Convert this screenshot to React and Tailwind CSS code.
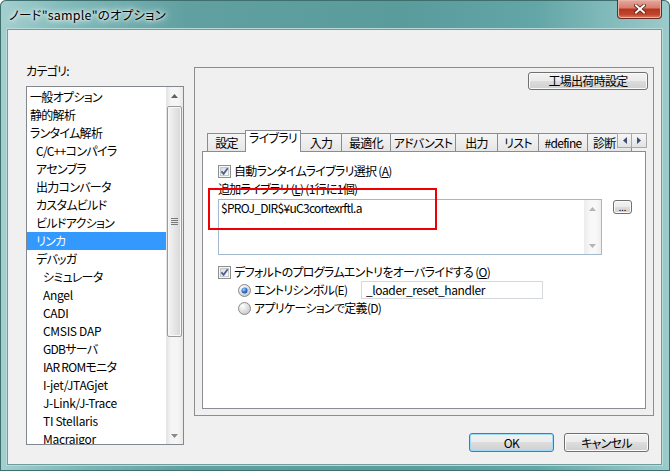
import React from "react";

const Check = () => (
  <svg width="13" height="13" viewBox="0 0 13 13" className="shrink-0">
    <defs>
      <linearGradient id="cbg" x1="0" y1="0" x2="1" y2="1">
        <stop offset="0" stopColor="#d6d6d6" />
        <stop offset="1" stopColor="#ffffff" />
      </linearGradient>
    </defs>
    <rect x="0.5" y="0.5" width="12" height="12" fill="#f6f6f6" stroke="#8e8f8f" />
    <rect x="2.5" y="2.5" width="8" height="8" fill="url(#cbg)" stroke="#c9c9c9" />
    <path d="M3.4 6.4 L5.6 8.9 L9.7 3.3" fill="none" stroke="#4a5f97" strokeWidth="1.8" />
  </svg>
);

const Radio = ({ checked }) => (
  <svg width="13" height="13" viewBox="0 0 13 13" className="shrink-0">
    <defs>
      <radialGradient id="rb" cx="0.35" cy="0.3" r="0.8">
        <stop offset="0" stopColor="#ffffff" />
        <stop offset="1" stopColor="#c4c4c4" />
      </radialGradient>
      <radialGradient id="rd" cx="0.4" cy="0.35" r="0.7">
        <stop offset="0" stopColor="#a8d6fa" />
        <stop offset="0.6" stopColor="#2f72c8" />
        <stop offset="1" stopColor="#1b4f99" />
      </radialGradient>
    </defs>
    <circle cx="6.5" cy="6.5" r="6" fill="url(#rb)" stroke="#8a8a8a" />
    {checked && <circle cx="6.5" cy="6.5" r="3" fill="url(#rd)" />}
  </svg>
);

const TriUp = ({ c = "#606060" }) => (
  <svg width="7" height="4" viewBox="0 0 7 4"><path d="M0 4 L3.5 0 L7 4 Z" fill={c} /></svg>
);
const TriDown = ({ c = "#606060" }) => (
  <svg width="7" height="4" viewBox="0 0 7 4"><path d="M0 0 L3.5 4 L7 0 Z" fill={c} /></svg>
);

const btn =
  "flex items-center justify-center rounded-[3px] border bg-[linear-gradient(#f2f2f2_0%,#ebebeb_49%,#dddddd_50%,#cfcfcf_100%)]";

const items = [
  ["一般オプション", 1],
  ["静的解析", 1],
  ["ランタイム解析", 1],
  ["C/C++コンパイラ", 2],
  ["アセンブラ", 2],
  ["出力コンバータ", 2],
  ["カスタムビルド", 2],
  ["ビルドアクション", 2],
  ["リンカ", 2, true],
  ["デバッガ", 2],
  ["シミュレータ", 3],
  ["Angel", 3, false, true],
  ["CADI", 3, false, true],
  ["CMSIS DAP", 3, false, true],
  ["GDBサーバ", 3],
  ["IAR ROMモニタ", 3],
  ["I-jet/JTAGjet", 3, false, true],
  ["J-Link/J-Trace", 3, false, true],
  ["TI Stellaris", 3, false, true],
  ["Macraigor", 3, false, true],
];
const lvl = { 1: "pl-[3px]", 2: "pl-[9px]", 3: "pl-[16px]" };

const tabs = [
  ["設定", "w-[39px] justify-center"],
  ["ライブラリ", "w-[56px] justify-center", true],
  ["入力", "w-[42px] justify-center"],
  ["最適化", "w-[50px] justify-center"],
  ["アドバンスト", "w-[66px] justify-center"],
  ["出力", "w-[43px] justify-center"],
  ["リスト", "w-[42px] justify-center"],
  ["#define", "w-[50px] justify-center"],
  ["診断", "w-[45px] justify-start pl-[5px]"],
];

export default function App() {
  return (
    <div className="w-[670px] h-[471px] overflow-hidden flex flex-col rounded-t-[6px] font-['Noto_Sans_CJK_JP',sans-serif] text-[12px] text-black tracking-[-0.7px] [font-feature-settings:'palt'] bg-[linear-gradient(90deg,#a4cfcf_0%,#80baba_10%,#60a0a1_28%,#5a9b9c_60%,#63a6a7_80%,#9ccbcb_100%)] shadow-[inset_0_0_0_1px_#3f6e6f]">
      {/* title bar */}
      <div className="h-[29px] shrink-0 flex justify-between items-start pl-[9px] pr-[8px]">
        <div className="self-center text-[12.5px] leading-[16px] tracking-[0.2px] [text-shadow:0_0_6px_#ffffff,0_0_10px_#ffffff,0_0_3px_#ffffff]">
          ノード"sample"のオプション
        </div>
        <div className="w-[45px] h-[19px] rounded-b-[4px] border border-t-0 border-[#6b2a22] bg-[linear-gradient(#e9a89b_0%,#d47d6d_45%,#b9331f_50%,#c0442c_80%,#d9806a_100%)] shadow-[inset_0_0_0_1px_#e8b3a8] flex items-center justify-center">
          <svg width="12" height="10" viewBox="0 0 12 10">
            <path d="M2 1.5 L10 8.5 M10 1.5 L2 8.5" stroke="#5a1a10" strokeWidth="3.6" strokeLinecap="square" />
            <path d="M2 1.5 L10 8.5 M10 1.5 L2 8.5" stroke="#ffffff" strokeWidth="2" strokeLinecap="square" />
          </svg>
        </div>
      </div>

      {/* client */}
      <div className="ml-[7px] mr-[8px] h-[436px] shrink-0 border border-[#6f9c9d] bg-[#f0f0f0] shadow-[0_0_0_1px_#b8dada] flex pl-[18px] pt-[33px]">
        {/* left column */}
        <div className="w-[158px] flex flex-col">
          <div className="h-[16px] leading-[16px]">カテゴリ:</div>
          <div className="mt-[7px] h-[359px] bg-white border border-[#828790] flex">
            <div className="flex-1 overflow-hidden pt-[1px]">
              {items.map(([t, l, sel, latin]) => (
                <div
                  key={t}
                  className={`h-[18px] leading-[18px] whitespace-nowrap ${lvl[l]} ${latin ? "tracking-[-0.3px]" : ""} ${sel ? "bg-[#3399ff] text-white" : ""}`}
                >
                  {t}
                </div>
              ))}
            </div>
            <div className="w-[17px] flex flex-col bg-[linear-gradient(90deg,#e3e3e3,#f5f5f5_30%,#f5f5f5_70%,#e9e9e9)]">
              <div className="h-[17px] flex items-center justify-center">
                <TriUp />
              </div>
              <div className="mt-[2px] h-[231px] mx-[1px] rounded-[2px] border border-[#9a9a9a] bg-[linear-gradient(90deg,#f4f4f4,#e6e6e6_50%,#d6d6d6)] shadow-[inset_0_0_0_1px_#f8f8f8] flex flex-col items-center justify-center gap-[1px]">
                <div className="w-[7px] h-[1px] bg-[#7a7a7a]" />
                <div className="w-[7px] h-[1px] bg-[#7a7a7a]" />
                <div className="w-[7px] h-[1px] bg-[#7a7a7a]" />
                <div className="w-[7px] h-[1px] bg-[#7a7a7a]" />
              </div>
              <div className="flex-1" />
              <div className="h-[17px] flex items-center justify-center">
                <TriDown c="#8a8a8a" />
              </div>
            </div>
          </div>
        </div>

        {/* right column */}
        <div className="ml-[10px] mt-[4px] w-[460px] flex flex-col">
          <div className="h-[349px] border border-[#8d8d8d] flex flex-col px-[7px] pb-[6px]">
            <div className="pt-[4px] flex justify-end -mr-[2px]">
              <div className={`${btn} border-[#707070] shadow-[inset_0_0_0_1px_#fbfbfb] w-[120px] h-[18px]`}>工場出荷時設定</div>
            </div>
            {/* tab strip */}
            <div className="relative mt-[40px] h-[21px] flex items-end pl-[5px]">
              {tabs.map(([t, w, sel], i) => (
                <div
                  key={t}
                  className={`${w} ${i > 0 ? "-ml-px" : ""} flex whitespace-nowrap border border-b-0 border-[#898c95] ${
                    sel
                      ? "h-[22px] -mb-px relative z-10 bg-white items-start leading-[14px]"
                      : "h-[18px] items-center leading-[16px] bg-[linear-gradient(#f5f5f5,#e6e6e6)]"
                  }`}
                >
                  {t}
                </div>
              ))}
              <div className="absolute top-[3px] -right-px flex z-20">
                <div className="w-[15px] h-[15px] border border-[#a9a9a9] bg-[linear-gradient(#f6f6f6,#e2e2e2)] flex items-center justify-center">
                  <svg width="4" height="7" viewBox="0 0 4 7"><path d="M4 0 L0 3.5 L4 7 Z" fill="#3c4d77" /></svg>
                </div>
                <div className="w-[15px] h-[15px] border border-l-0 border-[#a9a9a9] bg-[linear-gradient(#f6f6f6,#e2e2e2)] flex items-center justify-center">
                  <svg width="4" height="7" viewBox="0 0 4 7"><path d="M0 0 L4 3.5 L0 7 Z" fill="#3c4d77" /></svg>
                </div>
              </div>
            </div>
            {/* tab page */}
            <div className="relative flex-1 border border-[#898c95] bg-white pt-[10px] pl-[15px]">
              <div className="h-[18px] flex items-center gap-[3px]">
                <Check />
                <span className="leading-[16px]">
                  自動ランタイムライブラリ選択&nbsp;(<span className="underline">A</span>)
                </span>
              </div>
              <div className="h-[18px] leading-[18px]">
                追加ライブラリ&nbsp;(<span className="underline">L</span>)&nbsp;(1行に1個)
              </div>
              <div className="flex items-start">
                <div className="mt-[1px] w-[384px] h-[56px] border border-[#a3b8cc] flex">
                  <div className="flex-1 pl-[2px] leading-[16px]">$PROJ_DIR$¥uC3cortexrftl.a</div>
                  <div className="w-[17px] flex flex-col justify-between bg-[linear-gradient(90deg,#ececec,#f8f8f8_40%,#f8f8f8_70%,#eeeeee)]">
                    <div className="h-[17px] flex items-center justify-center">
                      <TriUp c="#b4b4b4" />
                    </div>
                    <div className="h-[17px] flex items-center justify-center">
                      <TriDown c="#b4b4b4" />
                    </div>
                  </div>
                </div>
                <div className={`${btn} border-[#707070] shadow-[inset_0_0_0_1px_#fbfbfb] ml-[11px] mt-[2px] w-[19px] h-[14px] items-end pb-[1px] text-[9px] leading-[9px] tracking-normal`}>
                  ...
                </div>
              </div>
              <div className="mt-[8px] h-[18px] flex items-center gap-[3px]">
                <Check />
                <span className="leading-[16px]">
                  デフォルトのプログラムエントリをオーバライドする&nbsp;(<span className="underline">O</span>)
                </span>
              </div>
              <div className="ml-[20px] h-[18px] flex items-center">
                <Radio checked />
                <span className="ml-[3px] w-[107px] leading-[16px] whitespace-nowrap">エントリシンボル(E)</span>
                <div className="w-[182px] h-[18px] border border-[#d5d9de] pl-[4px] leading-[16px] tracking-[-0.4px]">_loader_reset_handler</div>
              </div>
              <div className="ml-[20px] h-[18px] flex items-center">
                <Radio />
                <span className="ml-[3px] leading-[16px] whitespace-nowrap">アプリケーションで定義(D)</span>
              </div>
              {/* annotation */}
              <div className="absolute left-[5px] top-[36px] w-[229px] h-[42px] border-2 border-[#ee0000]" />
            </div>
          </div>
          <div className="mt-[17px] flex justify-end gap-[10px] pr-[5px]">
            <div className={`${btn} border-[#3c7fb1] shadow-[inset_0_0_0_1px_#9edcf8] w-[85px] h-[19px]`}>OK</div>
            <div className={`${btn} border-[#707070] shadow-[inset_0_0_0_1px_#fbfbfb] w-[85px] h-[19px]`}>キャンセル</div>
          </div>
        </div>
      </div>
    </div>
  );
}
